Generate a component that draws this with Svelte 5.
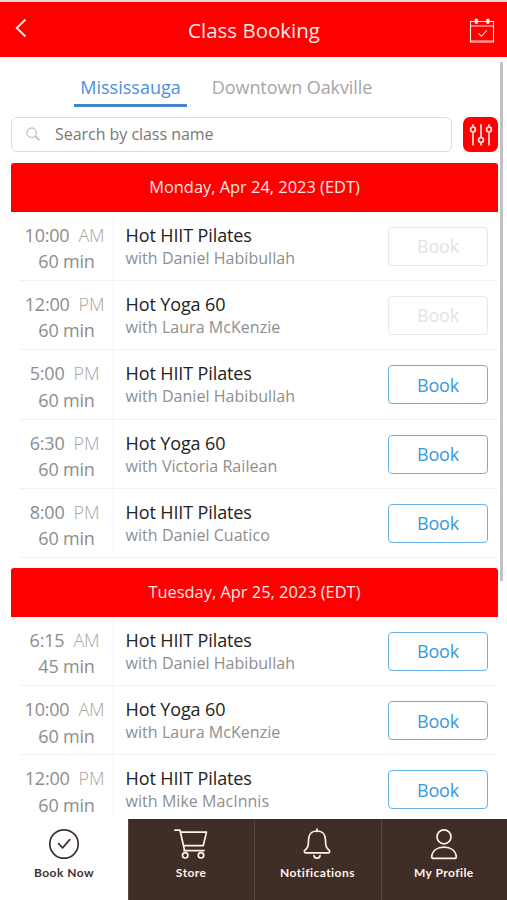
<script>
  const days = [
    {
      label: 'Monday, Apr 24, 2023 (EDT)',
      classes: [
        { time: '10:00', half: 'AM', mins: 60, name: 'Hot HIIT Pilates', coach: 'Daniel Habibullah', closed: true },
        { time: '12:00', half: 'PM', mins: 60, name: 'Hot Yoga 60', coach: 'Laura McKenzie', closed: true },
        { time: '5:00', half: 'PM', mins: 60, name: 'Hot HIIT Pilates', coach: 'Daniel Habibullah' },
        { time: '6:30', half: 'PM', mins: 60, name: 'Hot Yoga 60', coach: 'Victoria Railean' },
        { time: '8:00', half: 'PM', mins: 60, name: 'Hot HIIT Pilates', coach: 'Daniel Cuatico' }
      ]
    },
    {
      label: 'Tuesday, Apr 25, 2023 (EDT)',
      classes: [
        { time: '6:15', half: 'AM', mins: 45, name: 'Hot HIIT Pilates', coach: 'Daniel Habibullah' },
        { time: '10:00', half: 'AM', mins: 60, name: 'Hot Yoga 60', coach: 'Laura McKenzie' },
        { time: '12:00', half: 'PM', mins: 60, name: 'Hot HIIT Pilates', coach: 'Mike MacInnis' }
      ]
    }
  ];
</script>

<div class="app">
  <header>
    <svg class="back" width="12" height="20" viewBox="0 0 12 20"><path d="M10.5 1.5 1.7 10l8.8 8.5" /></svg>
    <h1>Class Booking</h1>
    <svg class="cal" width="26" height="26" viewBox="0 0 26 26">
      <path d="M1.500 3.500h23v20.500h-23zM1.500 8h23" />
      <path d="M1.500 22.800h23" opacity=".6" />
      <path class="rings" d="M7.300 2.300v2M18.900 2.300v2" />
      <path d="m9.500 15.300 3 3 5.200-6" />
    </svg>
  </header>

  <main>
    <nav class="tabs">
      <span class="tab on">Mississauga</span>
      <span class="tab other">Downtown Oakville</span>
    </nav>

    <div class="tools">
      <div class="search">
        <svg width="15" height="15" viewBox="0 0 15 15"><circle cx="5.700" cy="5.700" r="4.700" /><path class="grip" d="m9.300 9.300 4.200 4.100" /></svg>
        <span>Search by class name</span>
      </div>
      <div class="filter">
        <svg width="24" height="24" viewBox="0 0 24 24">
          <path d="M4 1.200v2.800M4 8.800v13.600M12 1.200v13.300M12 19.300v3.100M20 1.200v2.800M20 8.800v13.600" />
          <circle cx="4" cy="6.400" r="2.400" /><circle cx="12" cy="16.900" r="2.400" /><circle cx="20" cy="6.400" r="2.400" />
        </svg>
      </div>
    </div>

    {#each days as day}
      <section>
        <h2>{day.label}</h2>
        {#each day.classes as c}
          <div class="row">
            <div class="when">
              <div class="time">{c.time}<span>{c.half}</span></div>
              <div class="mins">{c.mins} min</div>
            </div>
            <div class="what">
              <div class="name">{c.name}</div>
              <div class="coach">with {c.coach}</div>
            </div>
            <button class:closed={c.closed}>Book</button>
          </div>
        {/each}
      </section>
    {/each}
    <div class="scrollbar"></div>
  </main>

  <footer>
    <div class="item active">
      <svg width="32" height="32" viewBox="0 0 32 32"><circle cx="16" cy="16" r="14.200" /><path d="m10.600 15.700 4 4.200 7.200-8.300" /></svg>
      <span>Book Now</span>
    </div>
    <div class="item">
      <svg width="36" height="32" viewBox="0 0 36 32">
        <path d="M2 2.200h5l4.400 19.500M7.500 4.100h26L30.200 17.700H10.500M11 22.600h20" /><circle cx="12.200" cy="27.300" r="2.700" /><circle cx="28" cy="27.300" r="2.700" />
      </svg>
      <span>Store</span>
    </div>
    <div class="item">
      <svg width="32" height="32" viewBox="0 0 32 32">
        <path d="M16 1v2.500M16 3c-5.500 0-8.500 3.800-8.500 9 0 6.500-.9 8.200-3.600 10.200-1 .9-.6 2.600.7 2.600h22.800c1.300 0 1.700-1.700.7-2.600-2.700-2-3.600-3.700-3.600-10.200 0-5.200-3-9-8.500-9zM13 27.600c.3 3.300 5.700 3.300 6 0" />
      </svg>
      <span>Notifications</span>
    </div>
    <div class="item">
      <svg width="32" height="32" viewBox="0 0 32 32"><circle cx="16" cy="8.800" r="7" /><path d="M5.500 30.400c-1.400 0-2-.8-1.800-2 .8-5.700 5.600-9.200 12.300-9.200s11.500 3.500 12.300 9.200c.2 1.200-.4 2-1.800 2z" /></svg>
      <span>My Profile</span>
    </div>
  </footer>
</div>

<style>
  :global(body) { margin: 0; background: #fff; }
  .app {
    width: 507px; height: 900px; box-sizing: border-box; overflow: hidden;
    display: flex; flex-direction: column;
    border-top: 2px solid #dcdcdf; background: #fff;
    font-family: 'Open Sans', 'Noto Sans', sans-serif;
  }
  svg { display: block; fill: none; stroke: currentColor; stroke-width: 1.7; flex: none; }
  header {
    flex: none; height: 55px; box-sizing: border-box; padding: 0 12px 0 15px;
    display: flex; align-items: center; justify-content: space-between;
    background: #fe0000; color: #ffe9e9;
  }
  .back { margin-bottom: 4px; margin-right: 12px; stroke-width: 1.8; }
  h1 { margin: 0; font-size: 20.500px; font-weight: 400; line-height: 28px; }
  .cal { stroke-width: 1.1; margin-top: 2px; }
  .rings { stroke-width: 3.500; stroke-linecap: round; }
  main { flex: 1; min-height: 0; overflow: hidden; position: relative; padding: 13px 9px 0 11px; }
  .tabs { display: flex; height: 37px; padding-left: 63px; gap: 14px; font-size: 18px; line-height: 34px; }
  .tab { box-sizing: border-box; height: 37px; width: 113px; text-align: center; white-space: nowrap; color: #a6a6a6; }
  .tab.on { color: #4a90e2; border-bottom: 3px solid #4286d2; }
  .tab.other { width: 182px; letter-spacing: -.1px; }
  .tools { display: flex; justify-content: space-between; margin-top: 10px; }
  .search {
    width: 441px; height: 35px; box-sizing: border-box; border: 1.500px solid #ddd; border-radius: 6px;
    display: flex; align-items: center; padding-left: 14px; gap: 14px; color: #c4c4c4;
  }
  .search svg { stroke-width: 1.3; }
  .grip { stroke-width: 2; }
  .search span { font-size: 16px; color: #777; line-height: 32px; margin-bottom: 2px; letter-spacing: -.04px; }
  .filter { width: 35px; height: 35px; border-radius: 7px; background: #fe0000; color: #ffe3e3; display: flex; align-items: center; justify-content: center; }
  h2 {
    margin: 0; height: 48.500px; border-radius: 3px 3px 0 0; background: #fe0000; color: #ffe9e9;
    font-size: 16.400px; font-weight: 400; line-height: 48px; text-align: center;
  }
  section { margin-top: 11px; }
  section + section { margin-top: 10px; }
  .row {
    height: 69.350px; box-sizing: border-box; margin: 0 1px 0 9px; padding-right: 9px;
    border-bottom: 1px solid #f1f1f1; display: flex; align-items: flex-start;
  }
  .when {
    width: 93px; height: 100%; box-sizing: border-box; border-right: 1px solid #fafafa;
    padding-top: 10px; text-align: center; color: #8c8c8c; font-size: 18px; line-height: 26.600px; letter-spacing: -.2px; white-space: nowrap;
  }
  .time { padding-right: 3px; }
  .mins { padding-left: 1px; }
  .time span { margin-left: 9px; font-weight: 300; color: #a5a5a5; }
  .what { flex: 1; padding: 12px 0 0 12.600px; white-space: nowrap; }
  .name { font-size: 18px; line-height: 23px; color: #222; letter-spacing: -.12px; }
  .coach { font-size: 16px; line-height: 23px; color: #8e8e8e; letter-spacing: .04px; }
  button {
    width: 100px; height: 39px; margin: 15px 0 0; padding: 0; box-sizing: border-box;
    border: 1.500px solid #68b4ea; border-radius: 4px; background: #fff;
    font: 400 18px/36px 'Open Sans', 'Noto Sans', sans-serif; letter-spacing: -.15px; color: #3a97dc;
  }
  button.closed { color: #e2e2e2; border-color: #e8e8e8; }
  .scrollbar { position: absolute; top: 5px; right: 4px; width: 3px; height: 519px; background: #c1c1c1; }
  footer { flex: none; height: 81px; display: flex; color: #fff2ea; background: #3f2d27; }
  .item {
    flex: 1; box-sizing: border-box; border-left: 1px solid #57463f; padding: 9px 1px 0 0;
    display: flex; flex-direction: column; align-items: center;
    font: 700 12px/16px Lato, 'Open Sans', sans-serif; letter-spacing: .45px;
  }
  .item svg { stroke-linejoin: round; stroke-linecap: round; }
  .item span { margin-top: 5px; }
  .item.active { background: #fff; color: #3f3330; border-left-color: #fff; flex: 0 0 128px; }
</style>
